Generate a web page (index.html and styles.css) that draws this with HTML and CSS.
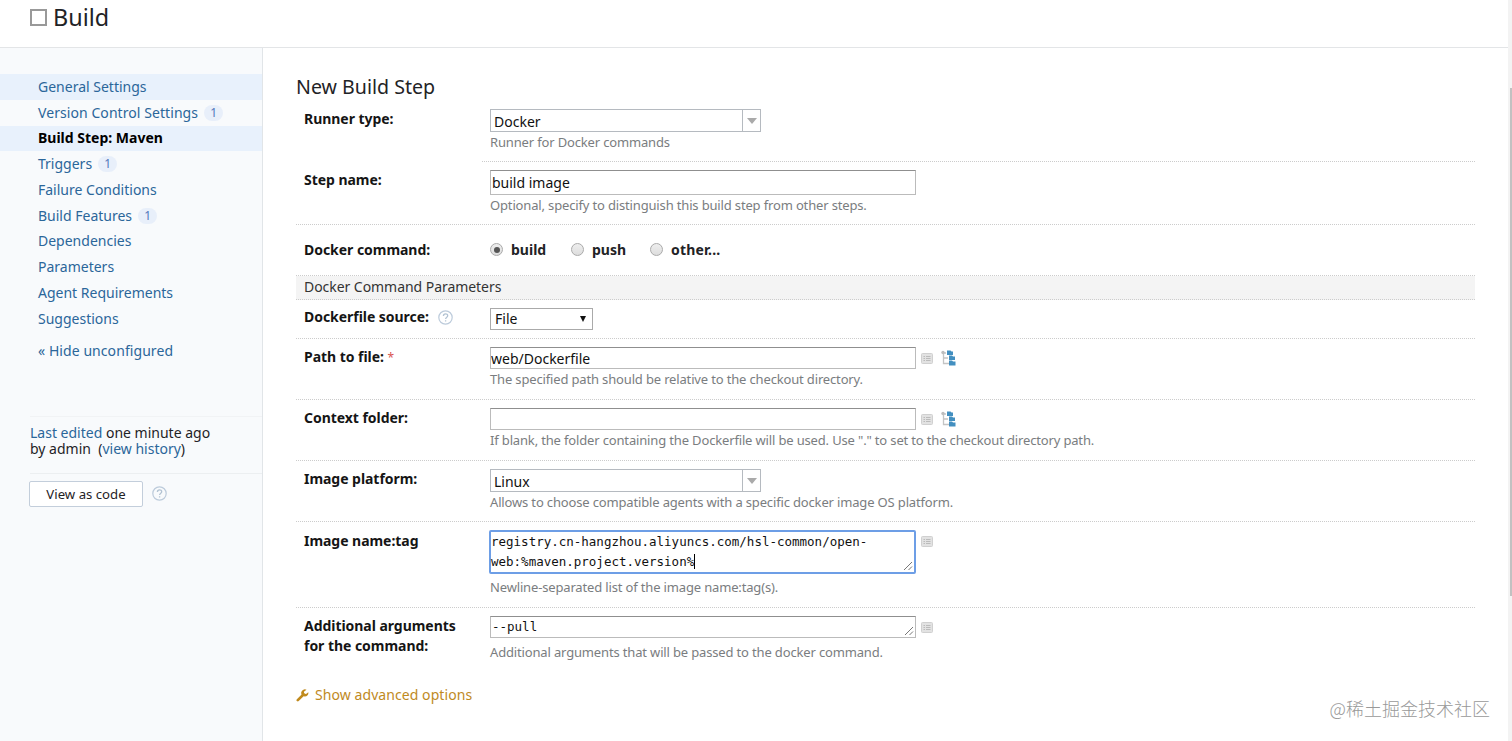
FILE: index.html
```html
<!DOCTYPE html>
<html lang="en">
<head>
    <meta charset="UTF-8">
    <meta name="viewport" content="width=device-width, initial-scale=1.0">
    <title>Build - New Build Step</title>
    <link rel="stylesheet" href="styles.css">
</head>
<body>
    <svg class="defs">
        <symbol id="help" viewBox="0 0 15 15">
            <circle cx="7.5" cy="7.5" r="6.7" fill="none" stroke="#bccbdb" stroke-width="1.2"/>
            <path d="M5.4 6C5.4 3.2 9.7 3.2 9.7 5.8 9.7 7.3 7.6 7.2 7.6 9.1M7.6 10.3V11.6" fill="none" stroke="#b3c3d3" stroke-width="1.3"/>
        </symbol>
        <symbol id="list" viewBox="0 0 12 11">
            <rect x=".5" y=".5" width="11" height="10" rx="1" fill="#e2e2e2" stroke="#d0d0d0"/>
            <path d="M2.5 3.5H4M5 3.5H9.5M2.5 5.5H4M5 5.5H9.5M2.5 7.5H4M5 7.5H9.5" stroke="#bbb"/>
        </symbol>
        <symbol id="tree" viewBox="0 0 15 16">
            <path d="M2.5 3V13.5H8M2.5 8H7M2.5 3H5" fill="none" stroke="#c4c4c4" stroke-width="1.3"/>
            <circle cx="2" cy="2.5" r="1.7" fill="#bdbdbd"/>
            <path d="M6 .5H9.500L10.500 1.500H12V5H6ZM8 5.500H11L12 6.500H14V10H8ZM8 10.500H11L12 11.500H14.500V15.500H8Z" fill="#438fc0"/>
        </symbol>
        <symbol id="grip" viewBox="0 0 10 10">
            <path d="M1 9L9 1M5.500 9L9 5.500" stroke="#777" stroke-width="1"/>
        </symbol>
    </svg>

    <header>
        <span class="square"></span>
        <h1>Build</h1>
    </header>

    <div class="page">
        <aside>
            <ul class="menu">
                <li class="hover"><a>General Settings</a></li>
                <li class="version"><a>Version Control Settings</a><span class="count">1</span></li>
                <li class="active"><a>Build Step: Maven</a></li>
                <li><a>Triggers</a><span class="count">1</span></li>
                <li><a>Failure Conditions</a></li>
                <li><a>Build Features</a><span class="count">1</span></li>
                <li><a>Dependencies</a></li>
                <li><a>Parameters</a></li>
                <li><a>Agent Requirements</a></li>
                <li><a>Suggestions</a></li>
            </ul>
            <a class="toggle">« Hide unconfigured</a>
            <div class="edited">
                <a>Last edited</a> one minute ago<br>
                by admin &nbsp;(<a>view history</a>)
            </div>
            <div class="code">
                <button>View as code</button>
                <svg class="help"><use href="#help"/></svg>
            </div>
        </aside>

        <main>
            <h2>New Build Step</h2>

            <div class="row runner">
                <label>Runner type:</label>
                <div class="value">
                    <div class="combo"><span>Docker</span><i></i></div>
                    <p class="note">Runner for Docker commands</p>
                </div>
            </div>

            <div class="row step">
                <label>Step name:</label>
                <div class="value">
                    <input type="text" value="build image">
                    <p class="note">Optional, specify to distinguish this build step from other steps.</p>
                </div>
            </div>

            <div class="row command">
                <label>Docker command:</label>
                <div class="value radios">
                    <span class="radio checked"></span><b class="build">build</b>
                    <span class="radio"></span><b class="push">push</b>
                    <span class="radio"></span><b class="other">other...</b>
                </div>
            </div>

            <div class="group">Docker Command Parameters</div>

            <div class="row source">
                <label>Dockerfile source: <svg class="help"><use href="#help"/></svg></label>
                <div class="value">
                    <div class="select">File<i></i></div>
                </div>
            </div>

            <div class="row path">
                <label>Path to file: <em>*</em></label>
                <div class="value">
                    <div class="line">
                        <input type="text" value="web/Dockerfile">
                        <svg class="list"><use href="#list"/></svg>
                        <svg class="tree"><use href="#tree"/></svg>
                    </div>
                    <p class="note">The specified path should be relative to the checkout directory.</p>
                </div>
            </div>

            <div class="row context">
                <label>Context folder:</label>
                <div class="value">
                    <div class="line">
                        <input type="text" value="">
                        <svg class="list"><use href="#list"/></svg>
                        <svg class="tree"><use href="#tree"/></svg>
                    </div>
                    <p class="note">If blank, the folder containing the Dockerfile will be used. Use "." to set to the checkout directory path.</p>
                </div>
            </div>

            <div class="row platform">
                <label>Image platform:</label>
                <div class="value">
                    <div class="combo"><span>Linux</span><i></i></div>
                    <p class="note">Allows to choose compatible agents with a specific docker image OS platform.</p>
                </div>
            </div>

            <div class="row tag">
                <label>Image name:tag</label>
                <div class="value">
                    <div class="line top">
                        <div class="area focus">registry.cn-hangzhou.aliyuncs.com/hsl-common/open-<br>web:%maven.project.version%<span class="caret"></span><svg class="grip"><use href="#grip"/></svg></div>
                        <svg class="list"><use href="#list"/></svg>
                    </div>
                    <p class="note">Newline-separated list of the image name:tag(s).</p>
                </div>
            </div>

            <div class="row args">
                <label>Additional arguments<br>for the command:</label>
                <div class="value">
                    <div class="line">
                        <div class="area">--pull<svg class="grip"><use href="#grip"/></svg></div>
                        <svg class="list"><use href="#list"/></svg>
                    </div>
                    <p class="note">Additional arguments that will be passed to the docker command.</p>
                </div>
            </div>

            <a class="advanced">
                <svg viewBox="0 0 13 13"><path d="M1.800 11.200L7.500 5.500" stroke="#c08a1e" stroke-width="2.600" stroke-linecap="round"/><path d="M10.500 .8A3.600 3.600 0 1 0 12.300 3.200L10 5.100 8.200 4.600 7.900 2.800Z" fill="#c08a1e"/></svg>
                Show advanced options
            </a>
        </main>
    </div>

    <div class="scrollbar"><div class="thumb"></div></div>
    <div class="watermark">@稀土掘金技术社区</div>
</body>
</html>
```
FILE: styles.css
```css
* {
    box-sizing: border-box;
}
body {
    margin: 0;
    height: 741px;
    overflow: hidden;
    position: relative;
    background: #fff;
    color: #1f2326;
    font: 14px/20px "Noto Sans", "Open Sans", sans-serif;
}
.defs {
    display: none;
}
h1, h2, p, ul {
    margin: 0;
    padding: 0;
    font-weight: normal;
}
a {
    color: #2b669a;
}
header {
    height: 48px;
    width: 1508px;
    border-bottom: 1px solid #e3e5e7;
    padding-left: 30px;
    display: flex;
    align-items: flex-start;
}
.square {
    width: 17px;
    height: 17px;
    margin: 9px 6px 0 0;
    border: 2px solid #999;
}
h1 {
    font-size: 23.4px;
    line-height: 34px;
}
.page {
    display: flex;
    height: 693px;
}

/* sidebar */
aside {
    width: 263px;
    padding-top: 26px;
    background: #f8fafc;
    border-right: 1px solid #e1e5e8;
}
.menu {
    list-style: none;
}
.menu li {
    height: 25.75px;
    padding-left: 38px;
    display: flex;
    align-items: center;
}
.menu .hover, .menu .active {
    background: #e8f1fc;
}
.menu .active a {
    color: #000;
    font-weight: bold;
}
.version a {
    letter-spacing: 0.07px;
}
.count {
    width: 19px;
    height: 16px;
    margin-left: 6px;
    border-radius: 8px;
    background: #e8effa;
    color: #5277bb;
    font-size: 12px;
    line-height: 16px;
    text-align: center;
}
.toggle {
    display: block;
    margin: 9px 0 0 38px;
    letter-spacing: 0.07px;
}
.edited {
    margin: 55px 0 0 30px;
    padding-top: 8px;
    height: 58px;
    border-top: 1px solid #f1f3f5;
    border-bottom: 1px solid #eceff1;
    line-height: 16px;
}
.code {
    display: flex;
    align-items: center;
    padding: 7px 0 0 29px;
}
.code button {
    width: 114px;
    height: 26px;
    padding: 0;
    border: 1px solid #c3cedb;
    border-radius: 2px;
    background: #fff;
    color: #1f2326;
    font: inherit;
    font-size: 13.2px;
}
.help {
    width: 15px;
    height: 15px;
    margin-left: 9px;
}

/* form */
main {
    width: 1212px;
    padding: 24px 0 0 33px;
}
h2 {
    font-size: 19.6px;
    line-height: 30px;
    height: 31px;
}
.row {
    display: flex;
    border-bottom: 1px dotted #ccc;
}
.row label {
    width: 194px;
    padding: 6px 0 0 8px;
    color: #151515;
    font-weight: bold;
    letter-spacing: -0.04px;
}
.row .value {
    padding-top: 8px;
}
label .help {
    vertical-align: -3px;
    margin-left: 5px;
}
label em {
    color: #d9534f;
    font-size: 12px;
    font-style: normal;
    font-weight: normal;
}
.runner {
    height: 59px;
    border: 0;
    background: repeating-linear-gradient(to right, #ccc 0 1px, transparent 1px 2px) 186px 100% / 100% 1px no-repeat;
}
.row.runner .value {
    padding-top: 6px;
}
.step {
    height: 63px;
}
.step label {
    padding-top: 8px;
}
.command {
    height: 51px;
}
.command label {
    padding-top: 15px;
}
.source {
    height: 39px;
}
.source label {
    padding-top: 7px;
}
.path, .context, .platform {
    height: 61px;
}
.path label, .context label, .platform label {
    padding-top: 8px;
}
.tag label {
    padding-top: 9px;
}
.args label {
    padding-top: 8px;
}
.tag {
    height: 86px;
}
.args {
    height: 72px;
    border: 0;
}
.note {
    color: #7a7d80;
    font-size: 13px;
    line-height: 20px;
    letter-spacing: -0.155px;
}
input {
    display: block;
    width: 426px;
    height: 22px;
    padding: 0;
    border: 1px solid #bbb;
    border-top-color: #8f8f8f;
    color: #111;
    font: inherit;
    outline: 0;
}
.step input {
    height: 25px;
    padding-left: 1px;
}
.combo {
    display: flex;
    width: 271px;
    height: 23px;
    border: 1px solid #b5bac0;
    color: #111;
    line-height: 23px;
}
.combo span {
    flex: 1;
    padding-left: 3px;
}
.combo i {
    width: 18px;
    border-left: 1px solid #b5bac0;
    display: flex;
    align-items: center;
    justify-content: center;
}
.combo i::after {
    content: "";
    border: 5px solid transparent;
    border-top: 6px solid #aaa;
    border-bottom: 0;
}
.radios {
    display: flex;
    align-items: flex-start;
}
.command .radios {
    padding-top: 15px;
}
.radios b {
    margin-left: 8px;
}
.build {
    width: 60px;
}
.push {
    width: 58px;
}
.other {
    letter-spacing: 0.15px;
}
.radio {
    width: 13px;
    height: 13px;
    margin-top: 3px;
    border: 1px solid #aaa;
    border-radius: 50%;
    background: linear-gradient(#eee, #ddd);
    display: flex;
    align-items: center;
    justify-content: center;
}
.checked::after {
    content: "";
    width: 6px;
    height: 6px;
    border-radius: 50%;
    background: #555;
}
.group {
    height: 24px;
    padding-left: 8px;
    background: #f4f4f4;
    border-bottom: 1px dotted #ccc;
    color: #333;
    line-height: 22px;
    letter-spacing: -0.05px;
}
.select {
    width: 103px;
    height: 22px;
    display: flex;
    justify-content: space-between;
    align-items: center;
    padding: 0 6px 0 4px;
    border: 1px solid #aaa;
    color: #111;
}
.select i {
    border: 3.5px solid transparent;
    border-top: 6px solid #111;
    border-bottom: 0;
}
.line {
    display: flex;
    align-items: center;
}
.list {
    width: 12px;
    height: 11px;
    margin-left: 5px;
}
.tree {
    width: 15px;
    height: 16px;
    margin-left: 8px;
}
.area {
    position: relative;
    width: 426px;
    height: 22px;
    padding-left: 1px;
    border: 1px solid #bbb;
    border-top-color: #8f8f8f;
    color: #111;
    font: 12.5px/20px "DejaVu Sans Mono", monospace;
}
.focus {
    width: 427px;
    height: 44px;
    margin-left: -1px;
    border: 2px solid #6d9ee6;
    border-radius: 2px;
    padding-left: 0;
}
.grip {
    position: absolute;
    right: 1px;
    bottom: 1px;
    width: 10px;
    height: 10px;
}
.caret {
    display: inline-block;
    width: 1px;
    height: 15px;
    background: #000;
    vertical-align: -3px;
}
.top {
    align-items: flex-start;
}
.top .list {
    margin-top: 6px;
}
.tag .note {
    margin-top: 3px;
}
.args .note {
    margin-top: 4px;
}
.advanced {
    display: flex;
    align-items: center;
    gap: 6px;
    margin-top: 5px;
    color: #c08a1e;
    letter-spacing: 0.07px;
}
.advanced svg {
    width: 13px;
    height: 13px;
}

.scrollbar {
    position: absolute;
    top: 0;
    right: 0;
    width: 4px;
    height: 741px;
    background: #f3f3f3;
}
.thumb {
    width: 2px;
    height: 508px;
    margin: 88px 0 0 2px;
    background: #c1c1c1;
}
.watermark {
    position: absolute;
    right: 22px;
    bottom: 20px;
    color: #999;
    font: 300 18px/26px "Noto Sans CJK SC", sans-serif;
}
```
